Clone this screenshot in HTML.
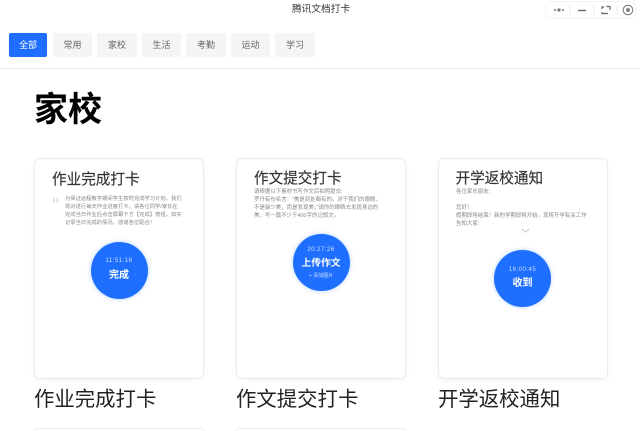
<!DOCTYPE html>
<html lang="zh">
<head>
<meta charset="utf-8">
<style>
html,body{margin:0;padding:0;background:#fff;width:640px;height:431px;overflow:hidden;}
#root{position:relative;width:640px;height:431px;overflow:hidden;font-family:"Liberation Sans","Noto Sans CJK SC",sans-serif;color:#000;}
.a{position:absolute;white-space:nowrap;}
.tab{position:absolute;top:33px;height:24px;line-height:24px;text-align:center;background:#f5f5f5;color:#666;font-size:9px;border-radius:2px;}
.card{position:absolute;top:158px;width:170px;height:221px;box-sizing:border-box;border:1px solid #ebebeb;border-radius:6px;background:#fff;box-shadow:0 2px 6px rgba(0,0,0,.04);}
.ct{position:absolute;font-size:14.6px;line-height:20px;color:#333;white-space:nowrap;-webkit-text-stroke:.15px #333;filter:blur(.25px);}
.tx{position:absolute;font-size:5.3px;line-height:8px;color:#888;white-space:nowrap;filter:blur(.35px);}
.circle{position:absolute;width:57px;height:57px;border-radius:50%;background:#1e6fff;box-shadow:0 0 4px rgba(30,111,255,.35);color:#fff;text-align:center;}
.time{position:absolute;left:0;right:0;font-size:6px;line-height:8px;letter-spacing:.5px;color:#cfdfff;}
.act{position:absolute;left:0;right:0;font-size:10px;line-height:14px;font-weight:bold;filter:blur(.2px);}
.lab{position:absolute;top:388px;font-size:20.4px;line-height:25px;color:#222;white-space:nowrap;}
.next{position:absolute;top:428px;width:170px;height:3px;box-sizing:border-box;border:1px solid #ebebeb;border-bottom:none;border-radius:6px 6px 0 0;}
</style>
</head>
<body>
<div id="root">
<div class="a" style="left:292px;top:3px;font-size:9.7px;line-height:13px;color:#333;">腾讯文档打卡</div>

<div class="a" style="left:545px;top:1px;width:92px;height:18px;box-sizing:border-box;border:1px solid #f3f3f3;border-radius:9px;"></div>
<svg class="a" style="left:545px;top:1px;" width="95" height="18" viewBox="0 0 95 18">
<circle cx="10" cy="9" r="1" fill="#777"/><circle cx="14" cy="9" r="1.6" fill="#777"/><circle cx="18" cy="9" r="1" fill="#777"/>
<path d="M25 4V14M49 4V14M72 4V14" stroke="#eee" stroke-width="1"/>
<path d="M33 9.500H41" stroke="#666" stroke-width="1.400"/>
<path d="M57 8V6H59M61.500 5.500H65V9M63 12.500H57V11" fill="none" stroke="#666" stroke-width="1.200"/>
<circle cx="83" cy="9" r="4.800" fill="none" stroke="#777" stroke-width="1"/><circle cx="83" cy="9" r="1.900" fill="#777"/>
</svg>

<div class="tab" style="left:9px;width:38px;background:#1e6fff;color:#fff;">全部</div>
<div class="tab" style="left:53px;width:39px;">常用</div>
<div class="tab" style="left:97px;width:40px;">家校</div>
<div class="tab" style="left:142px;width:39px;">生活</div>
<div class="tab" style="left:186px;width:40px;">考勤</div>
<div class="tab" style="left:231px;width:39px;">运动</div>
<div class="tab" style="left:275px;width:40px;">学习</div>
<div class="a" style="left:0;top:68px;width:640px;height:1px;background:#ececec;"></div>

<div class="a" style="left:34px;top:88px;font-size:34px;line-height:44px;font-weight:bold;color:#000;">家校</div>

<div class="card" style="left:34px;">
  <div class="ct" style="left:17px;top:11px;">作业完成打卡</div>
  <svg class="a" style="left:17px;top:38px;" width="7" height="7" viewBox="0 0 7 7"><path d="M1.500 0.500L0.700 5.500H2.700V0.500ZM5 0.500L4.200 5.500H6.200V0.500Z" fill="#dcdcdc"/></svg>
  <div class="tx" style="left:30px;top:36px;">为保证远程教学期间学生按时完成学习计划，我们<br>现对进行每天作业进度打卡。请各位同学/家长在<br>完成当日作业后点击屏幕下方【完成】按钮。如实<br>记录当日完成的情况。感谢各位配合！</div>
  <div class="circle" style="left:55.500px;top:82.500px;">
    <div class="time" style="top:15px;">11:51:18</div>
    <div class="act" style="top:27px;">完成</div>
  </div>
</div>

<div class="card" style="left:236px;">
  <div class="ct" style="left:17px;top:9.500px;">作文提交打卡</div>
  <div class="tx" style="left:17px;top:29px;font-size:5.450px;">请根据以下素材书写作文后拍照提交:<br>罗丹有句名言：“美是到处都有的。对于我们的眼睛，<br>不是缺少美，而是发现美。”请你的眼睛去发现身边的<br>美，写一篇不少于400字的记叙文。</div>
  <div class="circle" style="left:55.500px;top:75px;">
    <div class="time" style="top:12px;">20:27:26</div>
    <div class="act" style="top:23px;font-size:9.800px;">上传作文</div>
    <div class="time" style="top:38px;font-size:5px;letter-spacing:0;">+ 添加图片</div>
  </div>
</div>

<div class="card" style="left:438px;">
  <div class="ct" style="left:16.500px;top:9.500px;">开学返校通知</div>
  <div class="tx" style="left:17px;top:29px;font-size:5.450px;">各位家长朋友:<br><br>您好！<br>假期即将结束！新的学期即将开始。现将开学有关工作<br>告知大家:</div>
  <svg class="a" style="left:82px;top:69px;" width="9" height="6" viewBox="0 0 9 6"><path d="M1 1L4.500 4.200L8 1" fill="none" stroke="#c8c8c8" stroke-width="1"/></svg>
  <div class="circle" style="left:55px;top:90.500px;">
    <div class="time" style="top:16px;">16:00:45</div>
    <div class="act" style="top:27px;">收到</div>
  </div>
</div>

<div class="lab" style="left:34px;">作业完成打卡</div>
<div class="lab" style="left:236px;">作文提交打卡</div>
<div class="lab" style="left:438px;">开学返校通知</div>

<div class="next" style="left:34px;"></div>
<div class="next" style="left:236px;"></div>
</div>
</body>
</html>
